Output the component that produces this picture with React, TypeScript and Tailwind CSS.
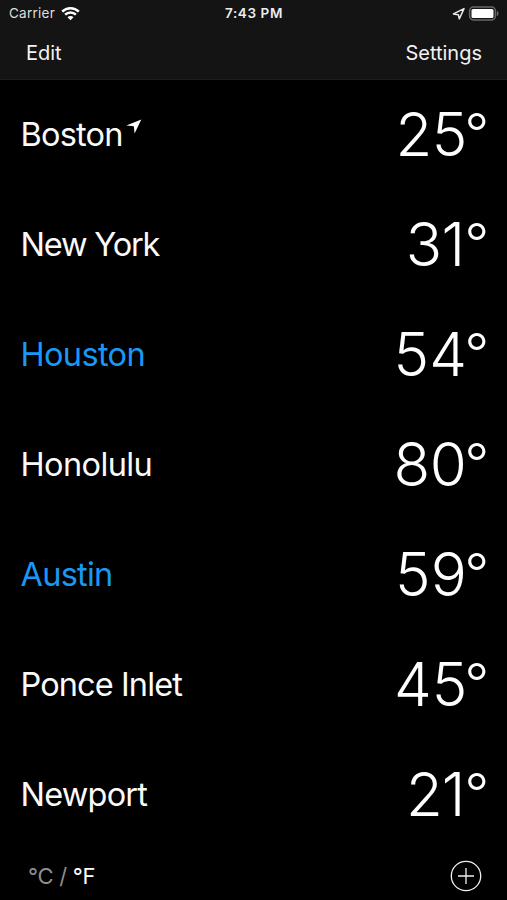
import React from "react";

type City = {
  name: string;
  temperature: number;
  nameTracking: string;
  tensTracking: string;
  onesTracking: string;
  highlighted?: boolean;
  current?: boolean;
};

const cities: City[] = [
  { name: "Boston", temperature: 25, nameTracking: "tracking-[-0.8px]", tensTracking: "tracking-[-0.5px]", onesTracking: "tracking-[-3px]", current: true },
  { name: "New York", temperature: 31, nameTracking: "tracking-[-1.2px]", tensTracking: "tracking-[-0.6px]", onesTracking: "tracking-[-0.8px]" },
  { name: "Houston", temperature: 54, nameTracking: "tracking-[-0.65px]", tensTracking: "tracking-[0px]", onesTracking: "tracking-[-2.5px]", highlighted: true },
  { name: "Honolulu", temperature: 80, nameTracking: "tracking-[-0.6px]", tensTracking: "tracking-[-0.2px]", onesTracking: "tracking-[-2.5px]" },
  { name: "Austin", temperature: 59, nameTracking: "tracking-[-0.75px]", tensTracking: "tracking-[0.2px]", onesTracking: "tracking-[-2.5px]", highlighted: true },
  { name: "Ponce Inlet", temperature: 45, nameTracking: "tracking-[-0.9px]", tensTracking: "tracking-[0px]", onesTracking: "tracking-[-3px]" },
  { name: "Newport", temperature: 21, nameTracking: "tracking-[-0.8px]", tensTracking: "tracking-[-1px]", onesTracking: "tracking-[-1px]" },
];

function WifiIcon() {
  return (
    <svg className="ml-[6px] h-[15px] w-[19px]" viewBox="0 0 19 15" fill="none" stroke="#fff">
      <path d="M1.2 5.6a11.8 11.8 0 0 1 16.6 0" strokeWidth="2.6" />
      <path d="M4.1 8.7a7.7 7.7 0 0 1 10.8 0" strokeWidth="2.4" />
      <path d="M9.5 14.2 6.5 11.2a4.2 4.2 0 0 1 6 0Z" fill="#fff" stroke="none" />
    </svg>
  );
}

function StatusBar() {
  return (
    <div className="grid h-[27px] grid-cols-3 items-center pl-[9px] pr-[8px] text-[13.5px] leading-none">
      <div className="flex items-center tracking-[0.25px] text-[#dedede]">
        <span className="pt-[1px]">Carrier</span>
        <WifiIcon />
      </div>
      <div className="pt-[1px] text-center font-semibold tracking-[0.6px] text-[#ededed]">7:43 PM</div>
      <div className="flex items-center justify-end">
        <svg className="mr-[2px] h-[14px] w-[14px]" viewBox="0 0 14 14" fill="none" stroke="#e8e8e8" strokeWidth="1.5" strokeLinejoin="round">
          <path d="M12 1.6 7.3 11.9 6.3 7.7 1.4 6.9Z" />
        </svg>
        <svg className="h-[15px] w-[31px]" viewBox="0 0 31 15" fill="none">
          <rect x="1.6" y="1.1" width="25.8" height="12.8" rx="3.8" stroke="#686868" strokeWidth="1.5" />
          <rect x="3.5" y="3" width="22" height="9" rx="1.6" fill="#fff" />
          <path d="M28.8 4.8c2.4 1.2 2.4 4.2 0 5.4Z" fill="#686868" />
        </svg>
      </div>
    </div>
  );
}

function CityRow({ city }: { city: City }) {
  const [tens, ones] = String(city.temperature);
  return (
    <li className="flex h-[110px] items-center justify-between pl-[20.5px] pr-[18px]">
      <div className="flex items-center">
        <span
          className={`text-[32.5px] leading-none ${city.nameTracking} ${city.highlighted ? "text-[#1998f5]" : "text-[#fafafa]"}`}
        >
          {city.name}
        </span>
        {city.current && (
          <svg className="mb-[18px] ml-[3px] h-[15px] w-[16px]" viewBox="0 0 16 15" fill="#fff">
            <path d="M15.3.5 8.6 14.6 7.8 7.3.4 6.4Z" />
          </svg>
        )}
      </div>
      <div className="mb-[2px] flex items-start text-[60px] leading-none font-[350] whitespace-nowrap text-white">
        <span className={city.tensTracking}>{tens}</span>
        <span className={city.onesTracking}>{ones}</span>
        <span className="pt-[1.5px] text-[54px] leading-none">°</span>
      </div>
    </li>
  );
}

export default function App() {
  return (
    <main className="flex h-[900px] w-[507px] flex-col overflow-hidden bg-black font-['Inter',sans-serif] text-white">
      <header className="h-[80px] border-b border-[#1c1c1c] bg-[#141414]">
        <StatusBar />
        <nav className="flex h-[51px] items-center justify-between pl-[26px] pr-[25px] text-[20px] leading-none text-[#f2f2f2]">
          <button>Edit</button>
          <button>Settings</button>
        </nav>
      </header>
      <ul>
        {cities.map((city) => (
          <CityRow key={city.name} city={city} />
        ))}
      </ul>
      <footer className="flex h-[50px] items-center justify-between pl-[28px] pr-[24px] pt-[2px]">
        <div className="text-[22px] leading-none tracking-[-0.3px] text-[#8e8e8e]">
          <span>°C / </span>
          <span className="text-white">°F</span>
        </div>
        <button aria-label="Add city">
          <svg className="h-[34px] w-[34px]" viewBox="0 0 34 34" fill="none" stroke="#f0f0f0" strokeWidth="1.3">
            <circle cx="17" cy="17" r="14.7" />
            <path d="M9 17h16M17 9v16" />
          </svg>
        </button>
      </footer>
    </main>
  );
}
